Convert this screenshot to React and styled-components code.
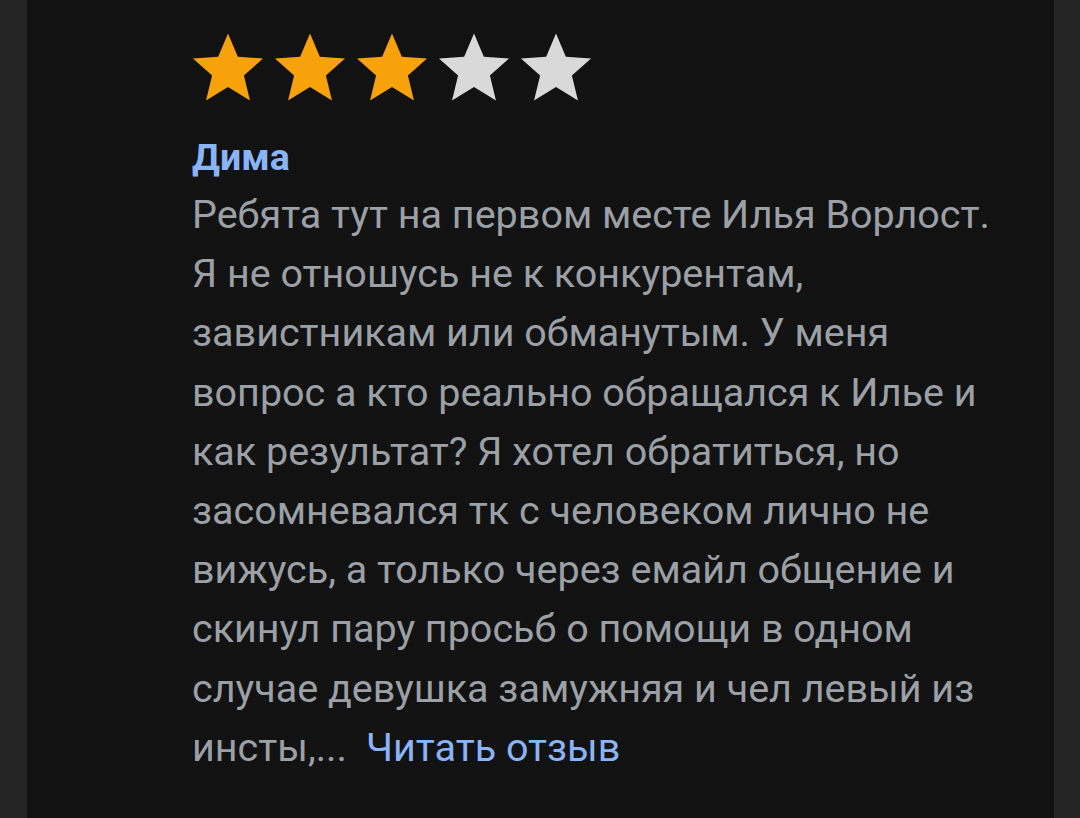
import React from "react";
import styled, { createGlobalStyle } from "styled-components";

const GlobalStyle = createGlobalStyle`
  html, body {
    margin: 0;
    padding: 0;
    background: #252525;
  }
  body {
    font-family: Roboto, "Noto Sans", "Liberation Sans", sans-serif;
  }
`;

const Page = styled.div`
  width: 1080px;
  height: 818px;
  overflow: hidden;
  padding: 0 26px 0 27px;
  box-sizing: border-box;
`;

const Card = styled.div`
  background: #121212;
  height: 100%;
  padding: 33px 0 0 165px;
  box-sizing: border-box;
`;

const Stars = styled.div`
  display: flex;
  gap: 12px;
  margin-left: 1px;
  height: 68px;
`;

const Name = styled.div`
  margin-top: 34px;
  font-size: 37.5px;
  font-weight: 700;
  color: #8ab4f8;
  line-height: 44px;
`;

const Body = styled.div`
  margin-top: 6px;
  font-size: 39.5px;
  line-height: 59.2px;
  color: #9aa0a6;
`;

const Line = styled.span`
  display: block;
  white-space: nowrap;
`;

const More = styled.a`
  color: #8ab4f8;
  margin-left: 19px;
  text-decoration: none;
`;

const Star = ({ filled }) => (
  <svg width="70" height="68" viewBox="0 0 22 21">
    <polygon
      points="11,0 14.09,7.26 22,7.8 16,13.14 17.9,21 11,16.77 4.1,21 6,13.14 0,7.8 7.91,7.26"
      fill={filled ? "#f7a10b" : "#d9d9d9"}
    />
  </svg>
);

const lines = [
  "Ребята тут на первом месте Илья Ворлост.",
  "Я не отношусь не к конкурентам,",
  "завистникам или обманутым. У меня",
  "вопрос а кто реально обращался к Илье и",
  "как результат? Я хотел обратиться, но",
  "засомневался тк с человеком лично не",
  "вижусь, а только через емайл общение и",
  "скинул пару просьб о помощи в одном",
  "случае девушка замужняя и чел левый из",
];

export default function App() {
  return (
    <Page>
      <GlobalStyle />
      <Card>
        <Stars>
          {[1, 2, 3, 4, 5].map((n) => (
            <Star key={n} filled={n <= 3} />
          ))}
        </Stars>
        <Name>Дима</Name>
        <Body>
          {lines.map((l) => (
            <Line key={l}>{l}</Line>
          ))}
          <Line>
            инсты,...<More href="#">Читать отзыв</More>
          </Line>
        </Body>
      </Card>
    </Page>
  );
}
